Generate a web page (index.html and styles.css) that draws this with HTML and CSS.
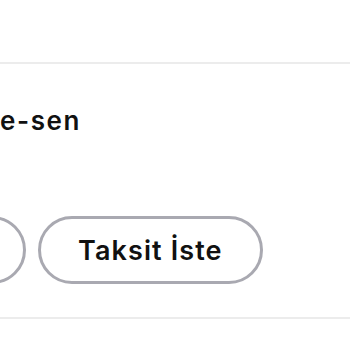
FILE: index.html
```html
<!DOCTYPE html>
<html>
<head>
<meta charset="utf-8">
<link rel="stylesheet" href="styles.css">
</head>
<body>
<div class="page">
  <div class="top-space"></div>
  <div class="divider"></div>
  <div class="section">
    <div class="title">e-sen</div>
    <div class="chips">
      <div class="chip chip-cut"></div>
      <div class="chip">Taksit İste</div>
    </div>
  </div>
  <div class="divider"></div>
</div>
</body>
</html>
```
FILE: styles.css
```css
html, body {
  margin: 0;
  padding: 0;
  background: #ffffff;
}
.page {
  width: 350px;
  height: 350px;
  overflow: hidden;
  font-family: Inter, "Noto Sans", sans-serif;
  color: #111111;
}
.top-space {
  height: 62px;
}
.divider {
  height: 2px;
  background: #ececec;
}
.section {
  height: 253px;
  display: flex;
  flex-direction: column;
}
.title {
  margin-top: 41px;
  font-size: 26px;
  line-height: 32px;
  font-weight: 600;
  letter-spacing: 1.6px;
  height: 32px;
}
.chips {
  margin-top: 79px;
  display: flex;
  gap: 12px;
  margin-left: -174px;
}
.chip {
  box-sizing: border-box;
  height: 68px;
  border: 3px solid #a9a9b1;
  border-radius: 34px;
  padding: 0 37px;
  display: flex;
  align-items: center;
  justify-content: center;
  font-size: 27px;
  font-weight: 600;
  letter-spacing: 1.1px;
  white-space: nowrap;
}
.chip-cut {
  width: 200px;
}
```
